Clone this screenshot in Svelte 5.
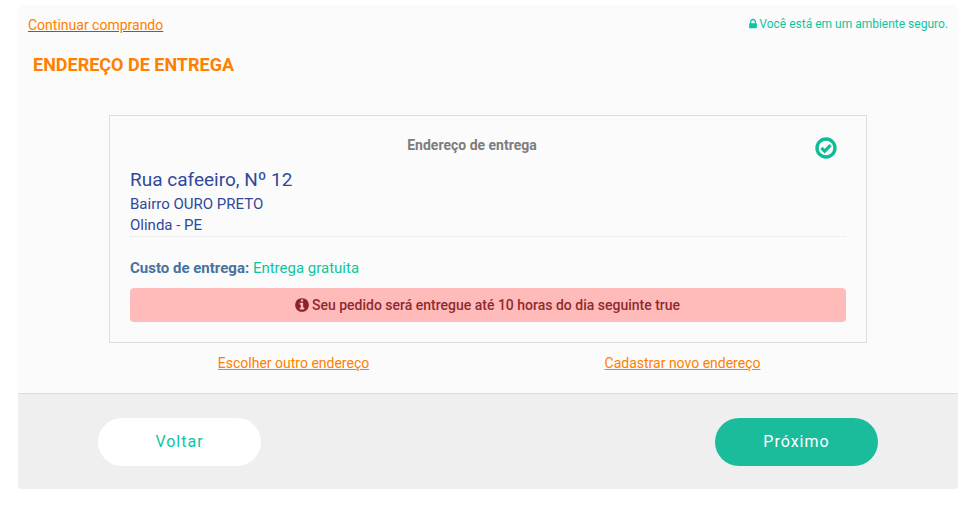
<script lang="ts">
	const address = {
		street: 'Rua cafeeiro, Nº 12',
		district: 'Bairro OURO PRETO',
		city: 'Olinda - PE'
	};
</script>

<div class="panel">
	<section class="content">
		<div class="top-row">
			<a class="link" href="#continuar">Continuar comprando</a>
			<span class="secure">
				<svg class="lock" viewBox="0 0 1792 1792" aria-hidden="true">
					<path
						d="M640 768h512v-192q0-106-75-181t-181-75-181 75-75 181v192zm832 96v576q0 40-28 68t-68 28h-960q-40 0-68-28t-28-68v-576q0-40 28-68t68-28h32v-192q0-184 132-316t316-132 316 132 132 316v192h32q40 0 68 28t28 68z"
					/>
				</svg>
				Você está em um ambiente seguro.
			</span>
		</div>

		<h1>ENDEREÇO DE ENTREGA</h1>

		<div class="card">
			<div class="card-head">
				<h2>Endereço de entrega</h2>
				<svg class="check" viewBox="0 0 22 22" aria-hidden="true">
					<circle cx="11" cy="11" r="9" />
					<polyline points="6.4,11 9.7,14.2 15.6,8.2" />
				</svg>
			</div>
			<div class="address">
				<p class="street">{address.street}</p>
				<p>{address.district}</p>
				<p>{address.city}</p>
			</div>
			<p class="cost"><strong>Custo de entrega:</strong> <span>Entrega gratuita</span></p>
			<div class="alert">
				<svg class="info" viewBox="0 0 1792 1792" aria-hidden="true">
					<path
						d="M1152 1376v-160q0-14-9-23t-23-9h-96v-512q0-14-9-23t-23-9h-320q-14 0-23 9t-9 23v160q0 14 9 23t23 9h96v320h-96q-14 0-23 9t-9 23v160q0 14 9 23t23 9h448q14 0 23-9t9-23zm-128-896v-160q0-14-9-23t-23-9h-192q-14 0-23 9t-9 23v160q0 14 9 23t23 9h192q14 0 23-9t9-23zm640 416q0 209-103 385.5t-279.5 279.5-385.5 103-385.5-103-279.5-279.5-103-385.5 103-385.5 279.5-279.5 385.5-103 385.5 103 279.5 279.5 103 385.5z"
					/>
				</svg>
				Seu pedido será entregue até 10 horas do dia seguinte true
			</div>
		</div>

		<div class="card-links">
			<a class="link plain" href="#outro">Escolher outro endereço</a>
			<a class="link plain" href="#novo">Cadastrar novo endereço</a>
		</div>
	</section>

	<footer>
		<button type="button" class="btn back">Voltar</button>
		<button type="button" class="btn next">Próximo</button>
	</footer>
</div>

<style>
	:global(body) {
		background: #ffffff;
		font-family: Roboto, 'Liberation Sans', sans-serif;
	}

	.panel {
		width: 940px;
		margin: 5px 0 0 18px;
		border-radius: 3px;
		overflow: hidden;
		font-family: Roboto, 'Liberation Sans', sans-serif;
	}

	.content {
		height: 389px;
		box-sizing: border-box;
		padding: 11px 10px 0;
		background: #fbfbfb;
		border-bottom: 1px solid #dddddd;
	}

	.top-row {
		display: flex;
		justify-content: space-between;
		align-items: flex-start;
		height: 18px;
	}

	.link {
		font-size: 14px;
		line-height: 18px;
		color: #ff8000;
		text-decoration: underline;
		text-decoration-color: #3a6d99;
	}

	.link.plain {
		text-decoration-color: #ff8000;
	}

	.secure {
		display: flex;
		align-items: center;
		height: 16px;
		font-size: 12px;
		line-height: 16px;
		color: #0dc5a1;
	}

	.lock {
		width: 12px;
		height: 12px;
		fill: #0dc5a1;
	}

	h1 {
		margin: 19px 0 0 5px;
		font-size: 18px;
		line-height: 24px;
		font-weight: 700;
		color: #ff8000;
	}

	.card {
		box-sizing: border-box;
		width: 758px;
		height: 228px;
		margin: 38px 0 0 81px;
		padding: 20px 20px 0;
		border: 1px solid #dddddd;
	}

	.card-head {
		position: relative;
		height: 20px;
	}

	h2 {
		margin: 0;
		font-size: 14px;
		line-height: 18px;
		font-weight: 700;
		text-align: center;
		color: #7d7d7d;
		padding-right: 32px;
	}

	.check {
		position: absolute;
		top: 1px;
		right: 9px;
		width: 22px;
		height: 22px;
		fill: none;
		stroke: #0ebc97;
	}

	.check circle {
		stroke-width: 3.4;
	}

	.check polyline {
		stroke-width: 3.2;
	}

	.address {
		margin-top: 12px;
		border-bottom: 1px dotted #e4e4e4;
		color: #30499b;
		font-size: 15px;
		line-height: 21px;
	}

	.address p {
		margin: 0;
	}

	.address .street {
		font-size: 19px;
		line-height: 24px;
		margin-bottom: 2px;
	}

	.cost {
		margin: 21px 0 0;
		font-size: 15px;
		line-height: 20px;
	}

	.cost strong {
		color: #47729e;
	}

	.cost span {
		color: #0dc5a1;
	}

	.alert {
		display: flex;
		justify-content: center;
		align-items: center;
		gap: 2px;
		height: 34px;
		margin-top: 10px;
		padding-right: 2px;
		border-radius: 4px;
		background: #ffbaba;
		color: #912a2e;
		font-size: 14px;
		font-weight: 500;
	}

	.info {
		width: 16px;
		height: 16px;
		fill: #8b2429;
	}

	.card-links {
		display: flex;
		margin: 11px 0 0 71px;
		width: 778px;
	}

	.card-links .link {
		flex: 1;
		text-align: center;
	}

	footer {
		display: flex;
		justify-content: space-between;
		height: 95px;
		box-sizing: border-box;
		padding: 24px 80px 0;
		background: #efefef;
	}

	.btn {
		width: 163px;
		height: 48px;
		padding: 0 0 2px;
		border: none;
		border-radius: 24px;
		font: inherit;
		font-size: 16px;
		letter-spacing: 1px;
		cursor: pointer;
	}

	.back {
		background: #ffffff;
		color: #0dc5a1;
	}

	.next {
		background: #1abc9c;
		color: #ffffff;
	}
</style>
